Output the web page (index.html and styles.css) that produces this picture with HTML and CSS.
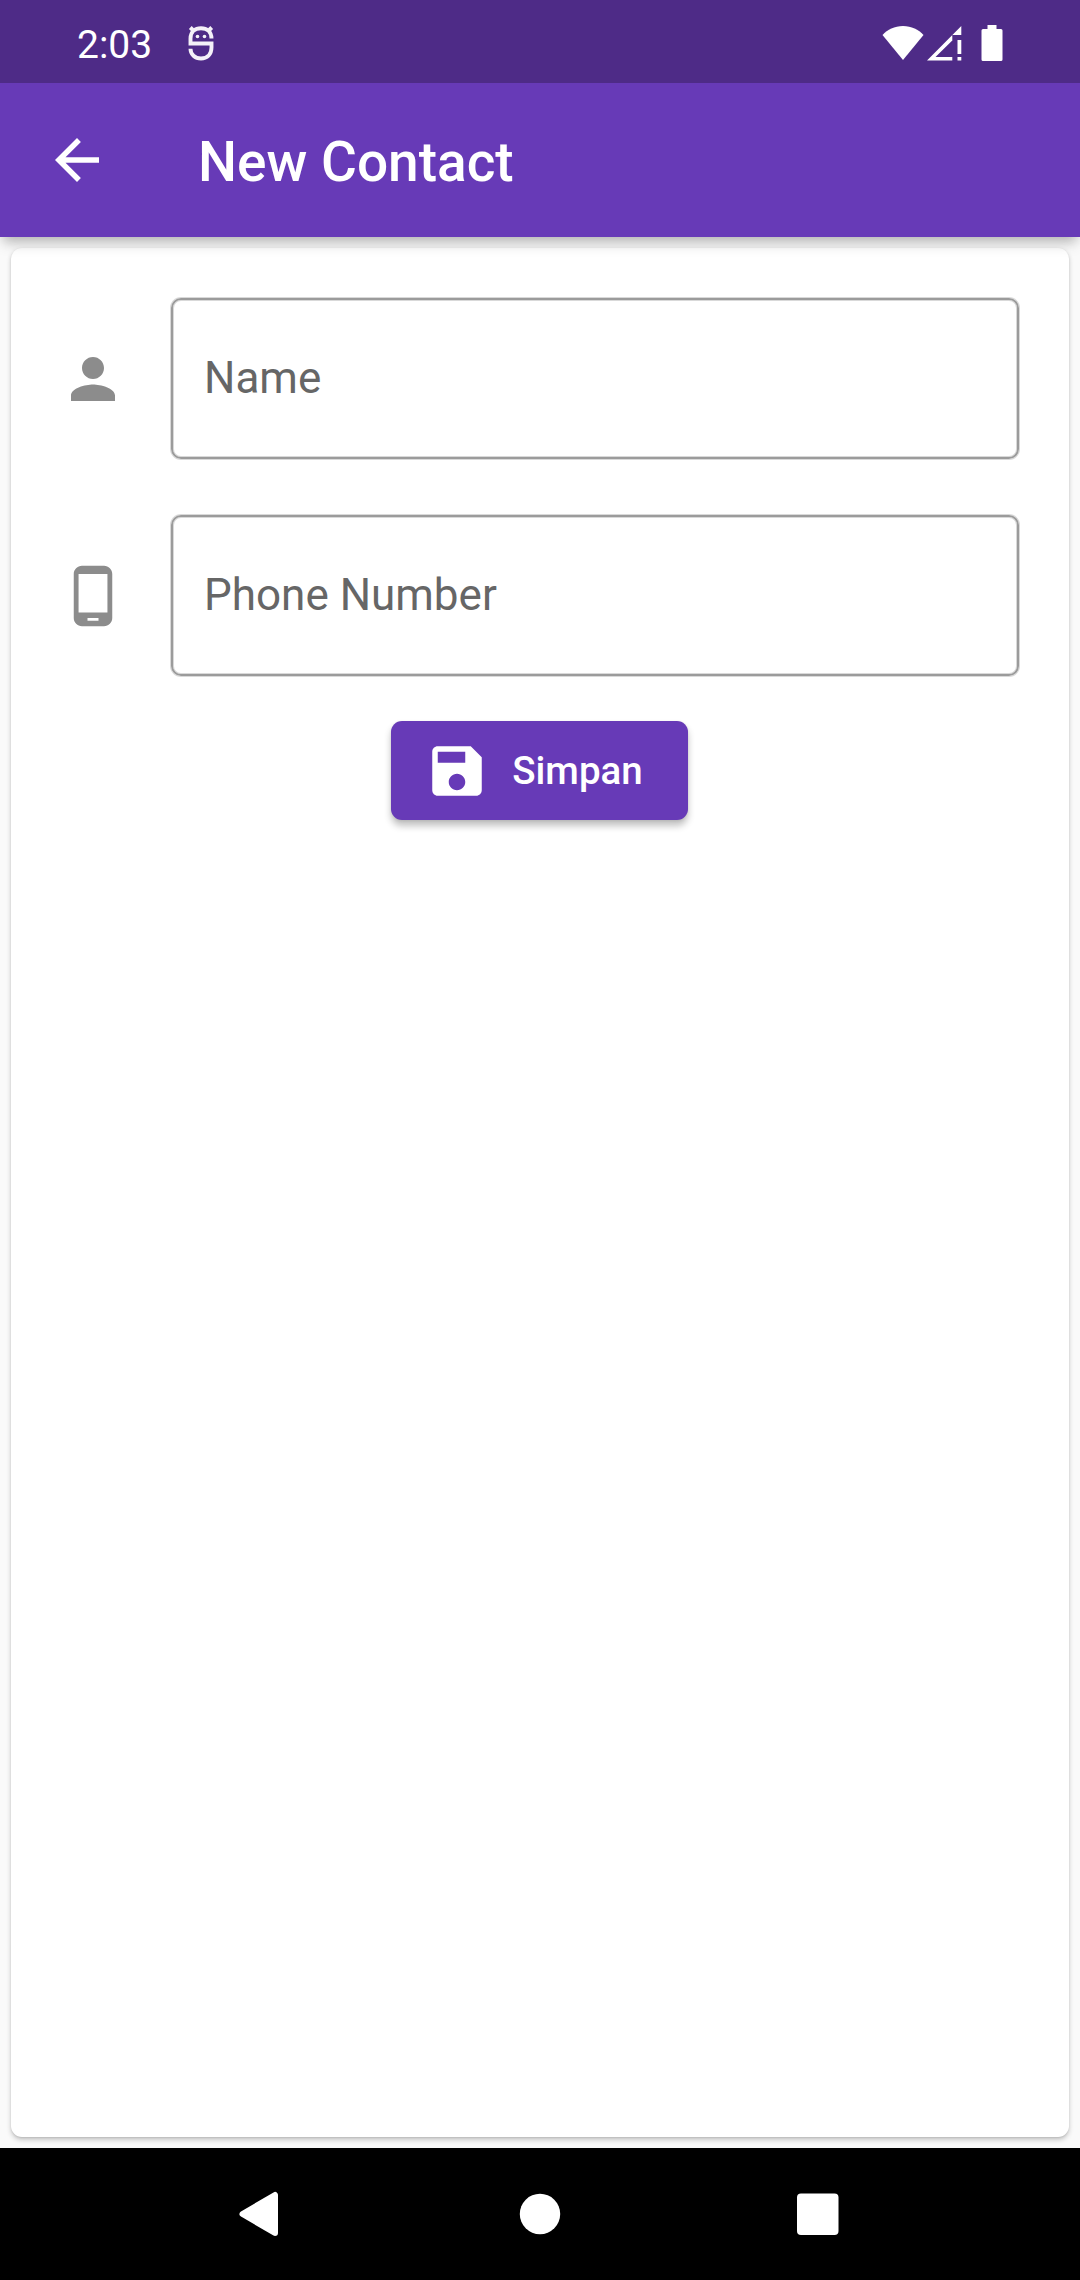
FILE: index.html
```html
<!DOCTYPE html>
<html lang="id">
<head>
<meta charset="utf-8">
<title>New Contact</title>
<link rel="stylesheet" href="styles.css">
</head>
<body>
<div class="screen">
  <div class="status-bar">
    <span class="clock">2:03</span>
    <svg class="debug-icon" viewBox="0 0 28 38" fill="none" stroke="#f4f1f8" stroke-width="3.900">
      <path d="M24.500 14.500C24.500 8 20 4.300 14 4.300S3.500 8 3.500 14.500V19.500H24.500V23.500C24.500 30.500 20 34.500 14 34.500S3.500 30.500 3.500 24.700"/>
      <path d="M3.300 3.500l4 4M24.700 3.500l-4 4"/>
      <circle cx="10.500" cy="12.500" r="1.800" fill="#f4f1f8" stroke="none"/>
      <circle cx="17.500" cy="12.500" r="1.800" fill="#f4f1f8" stroke="none"/>
    </svg>
    <div class="indicators">
      <svg class="wifi" viewBox="0 0 42 36" fill="#fff"><path d="M21 35L.5 10C5.500 4.500 12.500 1 21 1s15.500 3.500 20.500 9z"/></svg>
      <svg class="signal" viewBox="0 0 36 36" fill="#fff"><path fill-rule="evenodd" d="M35.300 1v9h-9v22v3.500H1zM26.300 15.500L9.500 32h16.800z"/><path d="M31.500 15h3.800v14h-3.800zM31.500 32h3.800v3.500h-3.800z"/></svg>
      <svg class="battery" viewBox="0 0 22 36" fill="#fff"><path d="M6.500 0h9v4H20a1.500 1.500 0 0 1 1.500 1.500v29A1.500 1.500 0 0 1 20 36H2a1.500 1.500 0 0 1-1.500-1.500v-29A1.500 1.500 0 0 1 2 4h4.500z"/></svg>
    </div>
  </div>
  <header class="app-bar">
    <svg class="icon" viewBox="0 0 24 24" fill="#fff"><path d="M20 11H7.830l5.590-5.590L12 4l-8 8 8 8 1.410-1.410L7.830 13H20v-2z"/></svg>
    <h1 class="title">New Contact</h1>
  </header>
  <main class="content">
    <form class="card">
      <div class="field">
        <svg class="icon" viewBox="0 0 24 24" fill="#8c8c8c"><path d="M12 12c2.210 0 4-1.790 4-4s-1.790-4-4-4-4 1.790-4 4 1.790 4 4 4zm0 2c-2.670 0-8 1.340-8 4v2h16v-2c0-2.660-5.330-4-8-4z"/></svg>
        <div class="input">Name</div>
      </div>
      <div class="field">
        <svg class="icon" viewBox="0 0 24 24" fill="#8c8c8c"><path d="M16 1H8C6.340 1 5 2.340 5 4v16c0 1.660 1.340 3 3 3h8c1.660 0 3-1.340 3-3V4c0-1.660-1.340-3-3-3zm-2 20h-4v-1h4v1zm3.250-3H6.750V4h10.500v14z"/></svg>
        <div class="input">Phone Number</div>
      </div>
      <button class="save" type="button">
        <svg class="icon" viewBox="0 0 24 24" fill="#fff"><path d="M17 3H5c-1.110 0-2 .9-2 2v14c0 1.100.890 2 2 2h14c1.100 0 2-.9 2-2V7l-4-4zm-5 16c-1.660 0-3-1.340-3-3s1.340-3 3-3 3 1.340 3 3-1.340 3-3 3zm3-10H5V5h10v4z"/></svg>
        <span>Simpan</span>
      </button>
    </form>
  </main>
  <nav class="nav-bar">
    <svg viewBox="0 0 66 66" fill="#fff" stroke="#fff" stroke-width="6" stroke-linejoin="round"><path d="M13.500 33L46 14v38z"/></svg>
    <svg viewBox="0 0 66 66" fill="#fff"><circle cx="33" cy="33" r="20.200"/></svg>
    <svg viewBox="0 0 66 66" fill="#fff"><rect x="12" y="12.500" width="41.500" height="41.500" rx="4"/></svg>
  </nav>
</div>
</body>
</html>
```
FILE: styles.css
```css
* { box-sizing: border-box; }

body {
  margin: 0;
  font-family: Roboto, "Liberation Sans", sans-serif;
}

svg { display: block; flex: none; }

.screen {
  width: 1080px;
  height: 2280px;
  display: flex;
  flex-direction: column;
  background: #fafafa;
  overflow: hidden;
}

.status-bar {
  height: 83px;
  flex: none;
  display: flex;
  align-items: center;
  padding: 3px 77px 0 77px;
  background: #4e2b87;
  color: #fff;
  z-index: 2;
}

.clock { padding-top: 3px; font-size: 39px; line-height: 46px; }
.debug-icon { width: 28px; height: 38px; margin-left: 35px; }

.indicators {
  display: flex;
  align-items: center;
  margin-left: auto;
}

.wifi { width: 42px; height: 36px; }
.signal { width: 36px; height: 36px; margin-left: 2px; }
.battery { width: 22px; height: 36px; margin-left: 19px; }

.icon { width: 66px; height: 66px; }

.app-bar {
  height: 154px;
  flex: none;
  display: flex;
  align-items: center;
  gap: 88px;
  padding-left: 44px;
  background: #673ab7;
  z-index: 1;
  box-shadow: 0 5.500px 11px -2.750px rgba(0, 0, 0, .2), 0 11px 13.750px -2.750px rgba(0, 0, 0, .12);
}

.title {
  margin: 0;
  padding-top: 4px;
  color: #fff;
  font-size: 55px;
  font-weight: 500;
  line-height: 64px;
}

.content {
  flex: 1;
  display: flex;
  padding: 11px;
}

.card {
  flex: 1;
  display: flex;
  flex-direction: column;
  padding: 50px 50px 0 49px;
  border-radius: 11px;
  background: #fff;
  box-shadow: 0 2.750px 5.500px rgba(0, 0, 0, .2), 0 1px 2px rgba(0, 0, 0, .1);
}

.field {
  display: flex;
  align-items: center;
  gap: 45px;
  margin-bottom: 56px;
}

.input {
  flex: 1;
  height: 161px;
  padding: 0 31px;
  border: 2px solid #9b9b9b;
  border-radius: 10px;
  box-shadow: 0 0 0 1px rgba(0, 0, 0, .15), inset 0 0 0 1px rgba(0, 0, 0, .15);
  color: #666;
  font-size: 44px;
  line-height: 157px;
}

.save {
  align-self: center;
  display: flex;
  align-items: center;
  gap: 22.500px;
  height: 99px;
  margin-top: -11px;
  padding: 0 45.500px 0 33px;
  border: 0;
  border-radius: 11px;
  background: #673ab7;
  box-shadow: 0 5.500px 7px rgba(0, 0, 0, .24), 0 1px 3px rgba(0, 0, 0, .08);
  color: #fff;
  font: 500 38.500px/46px Roboto, "Liberation Sans", sans-serif;
}

.nav-bar {
  height: 132px;
  flex: none;
  display: flex;
  align-items: center;
  justify-content: center;
  gap: 212px;
  background: #000;
}

.nav-bar svg { width: 66px; height: 66px; }
```
